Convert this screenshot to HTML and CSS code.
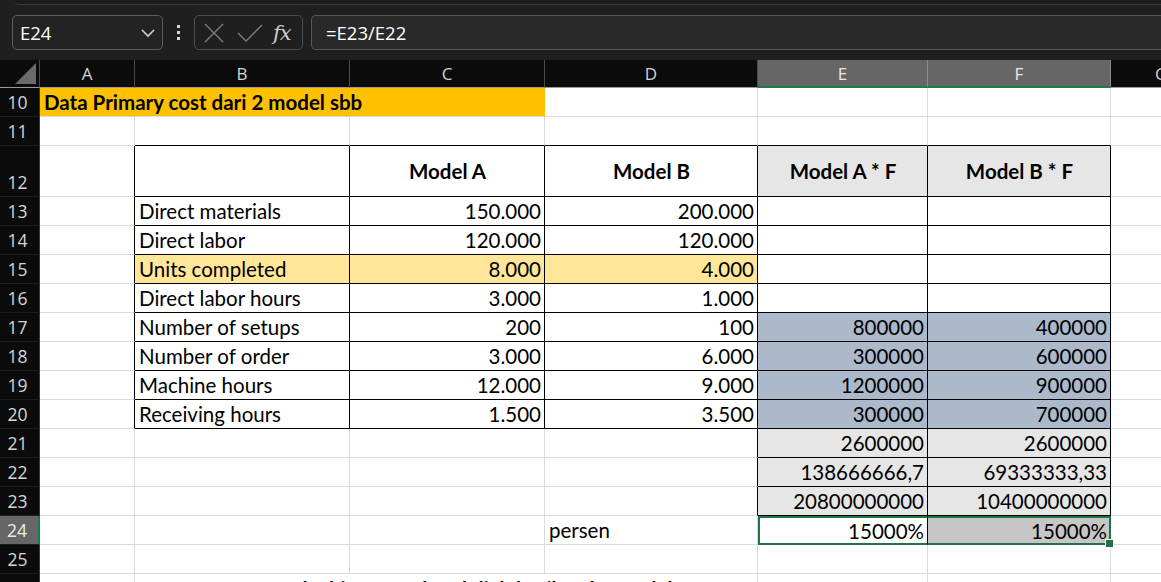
FILE: index.html
```html
<!DOCTYPE html>
<html lang="en">
<head>
  <meta charset="UTF-8" />
  <title>Data Primary cost</title>
  <link rel="stylesheet" href="styles.css">
</head>
<body>
  <div class="ribbon-edge"></div>
  <div class="formula-bar">
    <div class="name-box">
      <span>E24</span>
      <svg width="16" height="10" viewBox="0 0 16 10"><path d="M2 2 L8 8 L14 2" fill="none" stroke="#d0d0d0" stroke-width="1.6"/></svg>
    </div>
    <div class="dots"><i></i><i></i><i></i></div>
    <div class="fx-group">
      <svg width="22" height="22" viewBox="0 0 22 22"><path d="M2 2 L20 20 M20 2 L2 20" stroke="#7d7d7d" stroke-width="1.4" fill="none"/></svg>
      <svg width="26" height="20" viewBox="0 0 26 20"><path d="M1 10 L9 18 L25 2" stroke="#7d7d7d" stroke-width="1.4" fill="none"/></svg>
      <span class="fx">fx</span>
    </div>
    <div class="formula-input">=E23/E22</div>
  </div>

  <table class="sheet">
    <colgroup>
      <col class="c-row"><col class="c-a"><col class="c-b"><col class="c-c"><col class="c-d"><col class="c-e"><col class="c-f"><col class="c-g">
    </colgroup>
    <tr class="col-heads">
      <th class="corner"><span class="tri"></span></th>
      <th>A</th><th>B</th><th>C</th><th>D</th>
      <th class="sel">E</th><th class="sel">F</th><th class="last">G</th>
    </tr>
    <tr>
      <th class="rn">10</th>
      <td colspan="3" class="orange title">Data Primary cost dari 2 model sbb</td>
      <td></td><td></td><td></td><td></td>
    </tr>
    <tr>
      <th class="rn">11</th>
      <td></td><td class="bb"></td><td class="bb"></td><td class="bb"></td><td class="bb"></td><td class="bb"></td><td></td>
    </tr>
    <tr class="tall">
      <th class="rn bottom">12</th>
      <td class="br"></td>
      <td class="box"></td>
      <td class="box head">Model A</td>
      <td class="box head">Model B</td>
      <td class="box head grey">Model A * F</td>
      <td class="box head grey">Model B * F</td>
      <td></td>
    </tr>
    <tr>
      <th class="rn">13</th>
      <td class="br"></td>
      <td class="box">Direct materials</td>
      <td class="box num">150.000</td>
      <td class="box num">200.000</td>
      <td class="box"></td><td class="box"></td><td></td>
    </tr>
    <tr>
      <th class="rn">14</th>
      <td class="br"></td>
      <td class="box">Direct labor</td>
      <td class="box num">120.000</td>
      <td class="box num">120.000</td>
      <td class="box"></td><td class="box"></td><td></td>
    </tr>
    <tr>
      <th class="rn">15</th>
      <td class="br"></td>
      <td class="box yellow">Units completed</td>
      <td class="box num yellow">8.000</td>
      <td class="box num yellow">4.000</td>
      <td class="box"></td><td class="box"></td><td></td>
    </tr>
    <tr>
      <th class="rn">16</th>
      <td class="br"></td>
      <td class="box">Direct labor hours</td>
      <td class="box num">3.000</td>
      <td class="box num">1.000</td>
      <td class="box"></td><td class="box"></td><td></td>
    </tr>
    <tr>
      <th class="rn">17</th>
      <td class="br"></td>
      <td class="box">Number of setups</td>
      <td class="box num">200</td>
      <td class="box num">100</td>
      <td class="box num blue">800000</td><td class="box num blue">400000</td><td></td>
    </tr>
    <tr>
      <th class="rn">18</th>
      <td class="br"></td>
      <td class="box">Number of order</td>
      <td class="box num">3.000</td>
      <td class="box num">6.000</td>
      <td class="box num blue">300000</td><td class="box num blue">600000</td><td></td>
    </tr>
    <tr>
      <th class="rn">19</th>
      <td class="br"></td>
      <td class="box">Machine hours</td>
      <td class="box num">12.000</td>
      <td class="box num">9.000</td>
      <td class="box num blue">1200000</td><td class="box num blue">900000</td><td></td>
    </tr>
    <tr>
      <th class="rn">20</th>
      <td class="br"></td>
      <td class="box">Receiving hours</td>
      <td class="box num">1.500</td>
      <td class="box num">3.500</td>
      <td class="box num blue">300000</td><td class="box num blue">700000</td><td></td>
    </tr>
    <tr>
      <th class="rn">21</th>
      <td></td><td></td><td></td><td class="br"></td>
      <td class="box num grey">2600000</td><td class="box num grey">2600000</td><td></td>
    </tr>
    <tr>
      <th class="rn">22</th>
      <td></td><td></td><td></td><td class="br"></td>
      <td class="box num grey">138666666,7</td><td class="box num grey">69333333,33</td><td></td>
    </tr>
    <tr>
      <th class="rn">23</th>
      <td></td><td></td><td></td><td class="br"></td>
      <td class="box num grey">20800000000</td><td class="box num grey">10400000000</td><td></td>
    </tr>
    <tr>
      <th class="rn active">24</th>
      <td></td><td></td><td></td>
      <td class="label">persen</td>
      <td class="num pick-l">15000%</td>
      <td class="num pick-r"><span>15000%</span><i class="handle"></i></td>
      <td></td>
    </tr>
    <tr>
      <th class="rn">25</th>
      <td></td><td></td><td></td><td></td><td></td><td></td><td></td>
    </tr>
    <tr>
      <th class="rn"></th>
      <td></td>
      <td class="note" colspan="3">maka biaya overhead dialokasikan ke model</td>
      <td></td><td></td><td></td>
    </tr>
  </table>
</body>
</html>
```

FILE: styles.css
```css
html, body {
  margin: 0;
  padding: 0;
}

body {
  background: #1f1f1f;
  overflow: hidden;
  width: 1161px;
  height: 582px;
  font-family: Lato, "Open Sans", sans-serif;
}

.ribbon-edge {
  height: 4px;
  margin-left: 14px;
  background: #1a1b1b;
  border-bottom: 1px solid #3b3b3b;
  border-bottom-left-radius: 6px;
}

/* formula bar */
.formula-bar {
  height: 55px;
  box-sizing: border-box;
  padding: 10px 0 0 12px;
  display: flex;
  align-items: flex-start;
  background: #1f1f1f;
}

.name-box {
  width: 151px;
  height: 35px;
  box-sizing: border-box;
  border: 1px solid #5d5d5d;
  border-radius: 5px;
  background: #232323;
  display: flex;
  align-items: center;
  justify-content: space-between;
  padding: 0 6px 0 7px;
  color: #fff;
  font-family: "Open Sans", sans-serif;
  font-size: 18.5px;
}

.dots {
  width: 31px;
  height: 35px;
  display: flex;
  flex-direction: column;
  align-items: center;
  justify-content: center;
  gap: 3px;
}

.dots i {
  width: 3px;
  height: 3px;
  background: #d6d6d6;
}

.fx-group {
  width: 109px;
  height: 35px;
  box-sizing: border-box;
  border: 1px solid #4d4d4d;
  border-radius: 5px;
  display: flex;
  align-items: center;
  gap: 12px;
  padding-left: 8px;
}

.fx {
  font-family: "DejaVu Serif", "Liberation Serif", serif;
  font-style: italic;
  font-size: 21px;
  color: #cdcdcd;
  letter-spacing: -1px;
  margin-left: -2px;
}

.formula-input {
  flex: 1;
  margin-left: 8px;
  height: 35px;
  box-sizing: border-box;
  border: 1px solid #585858;
  border-right: none;
  border-radius: 5px 0 0 5px;
  background: #292929;
  color: #fff;
  font-family: "Open Sans", sans-serif;
  font-size: 18.5px;
  line-height: 33px;
  padding-left: 14px;
}

/* sheet grid */
.sheet {
  border-spacing: 0;
  table-layout: fixed;
  width: 1211px;
  background: #fff;
  font-size: 20.5px;
  color: #000;
}

.c-row { width: 40px; }
.c-a { width: 95px; }
.c-b { width: 215px; }
.c-c { width: 195px; }
.c-d { width: 213px; }
.c-e { width: 170px; }
.c-f { width: 183px; }
.c-g { width: 100px; }

.sheet tr { height: 29px; }
.sheet tr.tall { height: 51px; }
.sheet tr.col-heads { height: 28px; }

.sheet td {
  box-sizing: border-box;
  padding: 0 3px 0 4px;
  border-right: 1px solid #dadada;
  border-bottom: 1px solid #dadada;
  white-space: nowrap;
  overflow: hidden;
  vertical-align: middle;
  line-height: 20px;
}

.col-heads th {
  background: #0b0b0b;
  color: #d4d4d4;
  font-family: "Open Sans", sans-serif;
  font-weight: 400;
  font-size: 17px;
  border-right: 1px solid #4a4a4a;
  border-bottom: 1px solid #9a9a9a;
  padding: 0;
  box-sizing: border-box;
}

.col-heads th.sel {
  background: #666;
  color: #e8e8e8;
  border-right-color: #8d8d8d;
  border-bottom: 2px solid #1f7a45;
}

.col-heads th.last {
  text-align: left;
  padding-left: 44px;
  border-right: none;
}

.corner {
  position: relative;
}

.tri {
  position: absolute;
  right: 3px;
  bottom: 3px;
  width: 0;
  height: 0;
  border-left: 21px solid transparent;
  border-bottom: 21px solid #6a6a6a;
}

.rn {
  background: #0b0b0b;
  color: #d6d6d6;
  font-family: "Open Sans", sans-serif;
  font-weight: 400;
  font-size: 17.5px;
  text-align: center;
  padding: 0 4px 0 0;
  border-bottom: 1px solid #1d1d1d;
  border-right: 1px solid #3a3a3a;
  box-sizing: border-box;
}

.rn.bottom {
  vertical-align: bottom;
  padding-bottom: 2px;
}

.rn.active {
  background: #666;
  color: #ececec;
  border-right: 2px solid #1f7a45;
}

/* cell styles */
.title {
  font-weight: 700;
  padding-left: 2px;
}

.orange { background: #ffc000; border-right-color: #ffc000 !important; }
.yellow { background: #ffe699; }
.blue { background: #acb9ca; }
.grey { background: #e7e6e6; }

.sheet td.box {
  border-right-color: #000;
  border-bottom-color: #000;
}

.sheet td.br { border-right-color: #000; }
.sheet td.bb { border-bottom-color: #000; }

.head {
  font-weight: 700;
  text-align: center;
}

.num { text-align: right; }

.label { padding-left: 3px; }

.sheet td.pick-l {
  border: 2px solid #217346;
  border-right: 1px solid #000;
}

.sheet td.pick-r {
  position: relative;
  overflow: visible;
  background: #c6c6c6;
  border: 2px solid #217346;
  border-left: none;
  padding-right: 2px;
}

.handle {
  position: absolute;
  right: -5px;
  bottom: -5px;
  width: 7px;
  height: 7px;
  background: #217346;
  border: 1px solid #fff;
}

.note {
  font-weight: 700;
  padding-left: 140px !important;
  vertical-align: top !important;
  padding-top: 5px !important;
}
```
